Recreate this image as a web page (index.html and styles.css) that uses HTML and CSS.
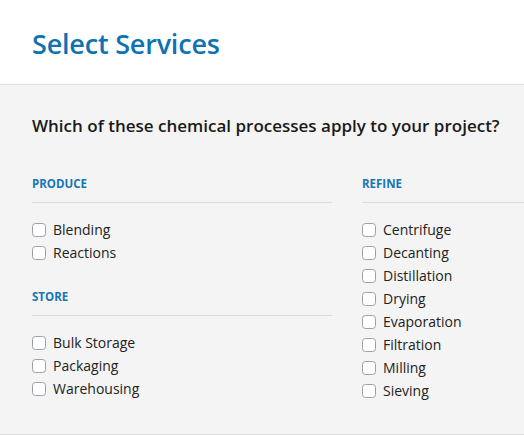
FILE: index.html
```html
<!DOCTYPE html>
<html lang="en">
<head>
<meta charset="utf-8">
<title>Select Services</title>
<link rel="stylesheet" href="styles.css">
</head>
<body>
<header class="page-header">
  <h1 class="page-title">Select Services</h1>
</header>
<main class="panel">
  <h2 class="question">Which of these chemical processes apply to your project?</h2>
  <div class="columns">
    <div class="column">
      <section class="group">
        <h3 class="group-title">PRODUCE</h3>
        <ul class="options">
          <li><label class="option"><input type="checkbox" class="box"><span>Blending</span></label></li>
          <li><label class="option"><input type="checkbox" class="box"><span>Reactions</span></label></li>
        </ul>
      </section>
      <section class="group group-next">
        <h3 class="group-title">STORE</h3>
        <ul class="options">
          <li><label class="option"><input type="checkbox" class="box"><span>Bulk Storage</span></label></li>
          <li><label class="option"><input type="checkbox" class="box"><span>Packaging</span></label></li>
          <li><label class="option"><input type="checkbox" class="box"><span>Warehousing</span></label></li>
        </ul>
      </section>
    </div>
    <div class="column">
      <section class="group">
        <h3 class="group-title">REFINE</h3>
        <ul class="options">
          <li><label class="option"><input type="checkbox" class="box"><span>Centrifuge</span></label></li>
          <li><label class="option"><input type="checkbox" class="box"><span>Decanting</span></label></li>
          <li><label class="option"><input type="checkbox" class="box"><span>Distillation</span></label></li>
          <li><label class="option"><input type="checkbox" class="box"><span>Drying</span></label></li>
          <li><label class="option"><input type="checkbox" class="box"><span>Evaporation</span></label></li>
          <li><label class="option"><input type="checkbox" class="box"><span>Filtration</span></label></li>
          <li><label class="option"><input type="checkbox" class="box"><span>Milling</span></label></li>
          <li><label class="option"><input type="checkbox" class="box"><span>Sieving</span></label></li>
        </ul>
      </section>
    </div>
  </div>
</main>
</body>
</html>
```
FILE: styles.css
```css
html, body {
  margin: 0;
  padding: 0;
  background: #ffffff;
  overflow: hidden;
}
body {
  font-family: "Open Sans", "Liberation Sans", sans-serif;
  color: #222222;
  width: 524px;
}
.page-header {
  height: 85px;
  box-sizing: border-box;
  padding: 26px 32px 0;
  border-bottom: 1px solid #dcdcdc;
  background: #ffffff;
}
.page-title {
  margin: 0;
  font-size: 27px;
  line-height: 36px;
  font-weight: 600;
  color: #0f72b3;
  letter-spacing: -0.2px;
}
.panel {
  background: #f4f4f4;
  padding: 29px 0 32px 32px;
  border-bottom: 1px solid #dcdcdc;
  height: 350px;
  box-sizing: border-box;
  overflow: hidden;
}
.question {
  margin: 0;
  font-size: 17px;
  line-height: 24px;
  font-weight: 600;
  color: #1a1a1a;
  white-space: nowrap;
}
.columns {
  display: grid;
  grid-template-columns: 300px 300px;
  column-gap: 30px;
  margin-top: 38px;
}
.group-title {
  margin: 0;
  font-size: 11.5px;
  line-height: 16px;
  font-weight: 700;
  color: #1677b5;
  padding-bottom: 10px;
  border-bottom: 1px solid #dcdcdc;
}
.group-next {
  margin-top: 25px;
}
.options {
  list-style: none;
  margin: 0;
  padding: 15px 0 0;
}
.option {
  display: flex;
  align-items: center;
  gap: 7px;
  height: 23px;
  font-size: 14px;
  line-height: 23px;
  color: #222222;
}
.box {
  appearance: none;
  -webkit-appearance: none;
  margin: 0;
  width: 14px;
  height: 14px;
  box-sizing: border-box;
  border: 1px solid #9aa0a8;
  border-radius: 3.5px;
  background: #ffffff;
}
```
